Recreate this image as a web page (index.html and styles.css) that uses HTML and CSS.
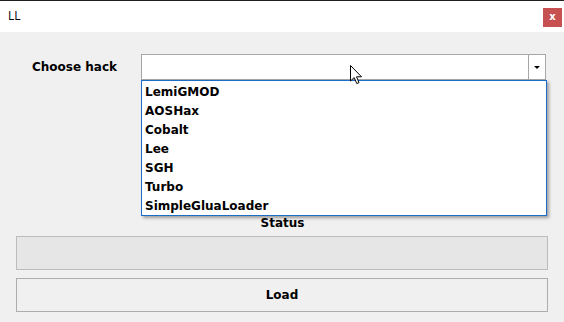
FILE: index.html
```html
<!DOCTYPE html>
<html>
<head>
<meta charset="utf-8">
<link rel="stylesheet" href="styles.css">
</head>
<body>
<div class="window">
  <div class="titlebar">
    <span class="title">LL</span>
    <span class="close">x</span>
  </div>
  <div class="content">
    <div class="row">
      <label class="label">Choose hack</label>
      <div class="combo">
        <div class="combo-field"></div>
        <div class="combo-btn"><span class="arrow"></span></div>
      </div>
    </div>
    <div class="status-label">Status</div>
    <div class="status-box"></div>
    <div class="load-btn">Load</div>
  </div>
  <ul class="dropdown">
    <li>LemiGMOD</li>
    <li>AOSHax</li>
    <li>Cobalt</li>
    <li>Lee</li>
    <li>SGH</li>
    <li>Turbo</li>
    <li>SimpleGluaLoader</li>
  </ul>
  <svg class="cursor" width="13" height="20" viewBox="0 0 13 20">
    <path d="M0.5 0.5 L0.5 16 L4.2 12.6 L6.8 18.6 L9 17.6 L6.5 11.8 L11.5 11.8 Z" fill="#fff" stroke="#000" stroke-width="1" stroke-linejoin="miter"/>
  </svg>
</div>
</body>
</html>
```
FILE: styles.css
```css
* { box-sizing: border-box; }
html, body { margin: 0; padding: 0; }
body { background: #f0f0f0; }
.window {
  position: relative;
  width: 564px;
  height: 322px;
  background: #f0f0f0;
  overflow: hidden;
  font-family: "DejaVu Sans", sans-serif;
}
.titlebar {
  height: 32px;
  border-top: 1px solid #1f1f1f;
  background: #fff;
  display: flex;
  align-items: flex-start;
  justify-content: space-between;
  padding: 0 2px 0 8px;
}
.title {
  font-family: "Open Sans", "Noto Sans", sans-serif;
  font-size: 12px;
  line-height: 14px;
  margin-top: 8px;
  color: #000;
}
.close {
  width: 19px;
  height: 19px;
  margin-top: 7px;
  background: #c75050;
  color: #fff;
  font-family: "DejaVu Sans", sans-serif;
  font-weight: bold;
  font-size: 10px;
  line-height: 17px;
  text-align: center;
}
.content {
  padding: 22px 16px 0 16px;
}
.row {
  display: flex;
  align-items: center;
  height: 26px;
}
.label {
  width: 125px;
  padding-left: 16px;
  font-weight: bold;
  font-size: 12px;
  color: #000;
}
.combo {
  width: 405px;
  height: 26px;
  border: 1px solid #a6a6a6;
  background: #fff;
  display: flex;
}
.combo-field { flex: 1; }
.combo-btn {
  width: 17px;
  border-left: 1px solid #a6a6a6;
  display: flex;
  align-items: center;
  justify-content: center;
}
.arrow {
  width: 0;
  height: 0;
  border-left: 3px solid transparent;
  border-right: 3px solid transparent;
  border-top: 3px solid #000;
}
.status-label {
  margin-top: 135px;
  height: 16px;
  line-height: 16px;
  margin-bottom: 5px;
  text-align: center;
  font-weight: bold;
  font-size: 12px;
  padding-left: 1px;
}
.status-box {
  height: 34px;
  border: 1px solid #bcbcbc;
  background: #e6e6e6;
}
.load-btn {
  margin-top: 8px;
  height: 34px;
  border: 1px solid #adadad;
  background: #f0f0f0;
  text-align: center;
  line-height: 32px;
  font-weight: bold;
  font-size: 12px;
}
.dropdown {
  position: absolute;
  left: 141px;
  top: 80px;
  width: 406px;
  height: 136px;
  margin: 0;
  padding: 2px 0 0 0;
  list-style: none;
  background: #fff;
  border: 1px solid #1a6ec8;
  box-shadow: 2px 2px 3px rgba(0, 0, 0, 0.35);
}
.dropdown li {
  height: 19px;
  line-height: 18px;
  padding-left: 3px;
  font-weight: bold;
  font-size: 12px;
  color: #000;
}
.cursor {
  position: absolute;
  left: 350px;
  top: 65px;
}
```
